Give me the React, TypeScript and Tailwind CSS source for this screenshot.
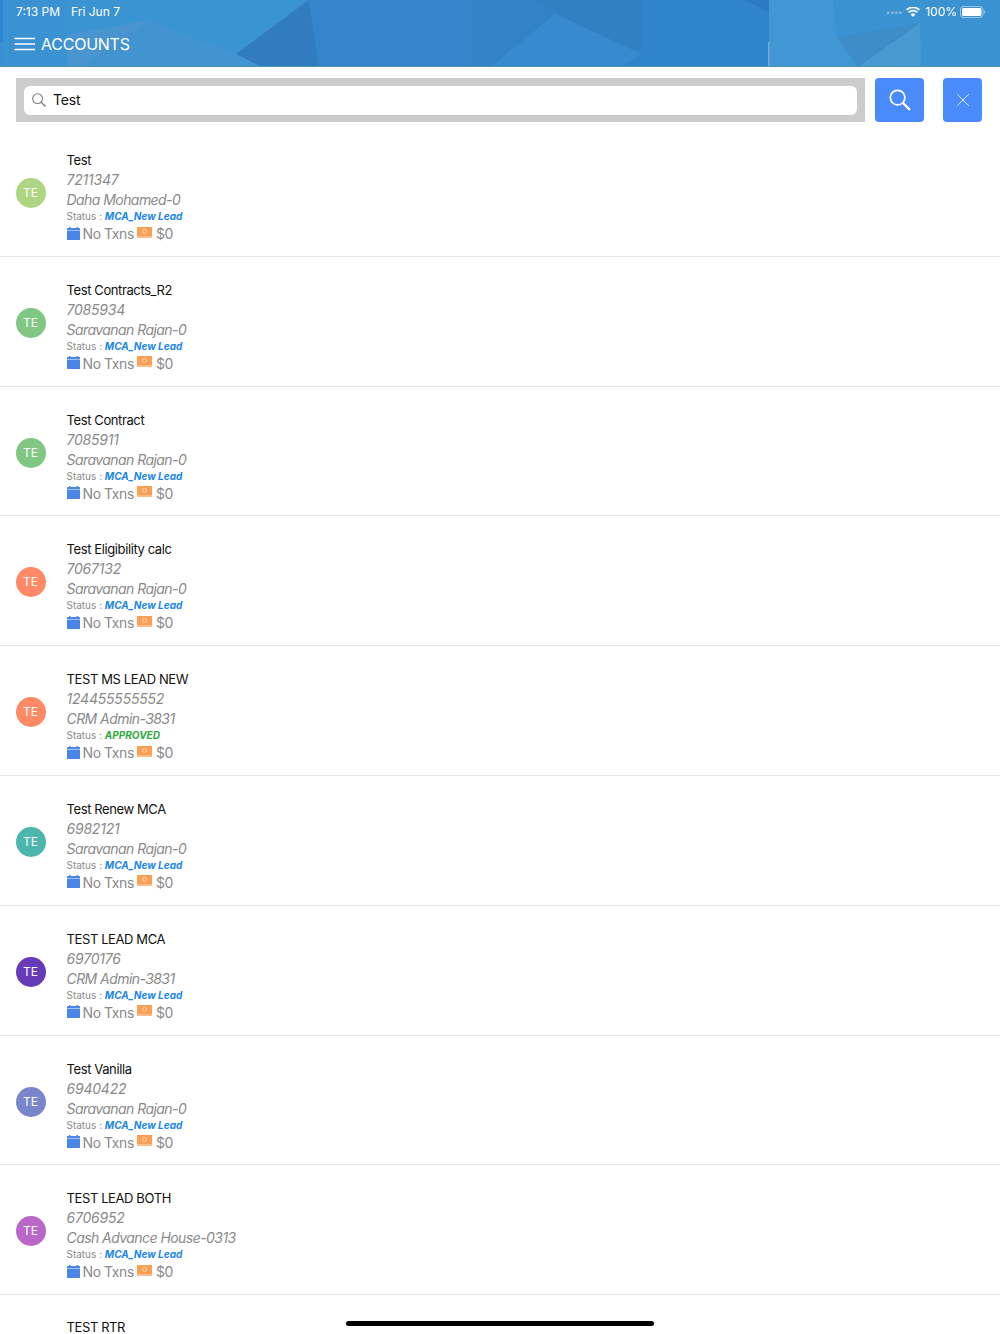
import { X } from 'lucide-react';

type Account = {
  name: string;
  id: string;
  owner: string;
  status: string;
  color: string;
};

const accounts: Account[] = [
  { name: 'Test', id: '7211347', owner: 'Daha Mohamed-0', status: 'MCA_New Lead', color: 'bg-[#aed581]' },
  { name: 'Test Contracts_R2', id: '7085934', owner: 'Saravanan Rajan-0', status: 'MCA_New Lead', color: 'bg-[#81c784]' },
  { name: 'Test Contract', id: '7085911', owner: 'Saravanan Rajan-0', status: 'MCA_New Lead', color: 'bg-[#81c784]' },
  { name: 'Test Eligibility calc', id: '7067132', owner: 'Saravanan Rajan-0', status: 'MCA_New Lead', color: 'bg-[#ff8a65]' },
  { name: 'TEST MS LEAD NEW', id: '124455555552', owner: 'CRM Admin-3831', status: 'APPROVED', color: 'bg-[#ff8a65]' },
  { name: 'Test Renew MCA', id: '6982121', owner: 'Saravanan Rajan-0', status: 'MCA_New Lead', color: 'bg-[#4db6ac]' },
  { name: 'TEST LEAD MCA', id: '6970176', owner: 'CRM Admin-3831', status: 'MCA_New Lead', color: 'bg-[#673ab7]' },
  { name: 'Test Vanilla', id: '6940422', owner: 'Saravanan Rajan-0', status: 'MCA_New Lead', color: 'bg-[#7986cb]' },
  { name: 'TEST LEAD BOTH', id: '6706952', owner: 'Cash Advance House-0313', status: 'MCA_New Lead', color: 'bg-[#ba68c8]' },
];

function HeaderArt() {
  return (
    <svg className="absolute inset-0" width="1000" height="67" viewBox="0 0 1000 67">
      <rect width="1000" height="67" fill="#3a8fd0" />
      <rect y="0" width="3" height="42" fill="#2f86d0" />
      <polygon points="3,0 306,0 236,54 205,67 3,67" fill="#3b92d2" />
      <polygon points="67,0 306,0 236,54 150,20 67,40" fill="#3a94d2" />
      <polygon points="150,20 236,54 262,67 83,67" fill="#4194d0" />
      <polygon points="67,35 150,20 83,67 67,67" fill="#4a95cf" />
      <polygon points="309,0 319,67 262,67 236,54" fill="#317bbf" />
      <polygon points="309,0 472,0 472,67 319,67" fill="#3485c9" />
      <polygon points="472,0 530,0 555,14 491,67 472,67" fill="#3283c6" />
      <polygon points="530,0 769,0 769,67 622,67 641,54 555,14" fill="#3180c2" />
      <polygon points="641,0 769,0 769,67 622,67 641,54" fill="#3084cc" />
      <polygon points="745,0 769,0 769,12" fill="#2c7ac6" />
      <polygon points="555,14 641,54 622,67 491,67" fill="#388acf" />
      <polygon points="769,0 833,0 837,37 858,67 769,67" fill="#4296d4" />
      <rect x="768" y="42" width="1.5" height="25" fill="#6aaede" />
      <polygon points="833,0 1000,0 1000,67 921,67 920,23 837,37" fill="#3a92d0" />
      <polygon points="837,37 920,23 858,67" fill="#3e8cc8" />
      <polygon points="858,67 920,23 921,67" fill="#4a9ad2" />
      <rect y="66" width="1000" height="1" fill="#4e90c0" />
    </svg>
  );
}

function MenuIcon() {
  return (
    <svg width="22" height="14" viewBox="0 0 22 14" fill="none" stroke="#ffffff" strokeWidth="1.4">
      <path d="M0.5 1.5h20.5M0.5 7h20.5M0.5 12.5h20.5" />
    </svg>
  );
}

function WifiIcon() {
  return (
    <svg width="14" height="10" viewBox="0 0 14 10" fill="none">
      <path d="M7 10L4.6 7.5a3.4 3.4 0 0 1 4.8 0z" fill="#ffffff" />
      <path d="M2.7 5.3a6.1 6.1 0 0 1 8.6 0" stroke="#ffffff" strokeWidth="1.7" />
      <path d="M0.6 3a9 9 0 0 1 12.8 0" stroke="#ffffff" strokeWidth="1.7" />
    </svg>
  );
}

function BatteryIcon() {
  return (
    <svg width="26" height="12" viewBox="0 0 26 12" fill="none">
      <rect x="0.5" y="0.5" width="22.5" height="11" rx="3" stroke="#ffffff" strokeOpacity="0.5" />
      <rect x="2" y="2" width="19.5" height="8" rx="1.6" fill="#ffffff" />
      <path d="M24.2 4.2c0.8 0.3 1.2 0.9 1.2 1.8s-0.4 1.5-1.2 1.8z" fill="#ffffff" fillOpacity="0.5" />
    </svg>
  );
}

function SmallSearchIcon() {
  return (
    <svg width="14" height="14" viewBox="0 0 14 14" fill="none" stroke="#7c7c7c" strokeWidth="1.1">
      <circle cx="5.6" cy="5.6" r="4.9" />
      <path d="M9.2 9.2l4.3 4.3" strokeWidth="1.4" />
    </svg>
  );
}

function BigSearchIcon() {
  return (
    <svg width="22" height="22" viewBox="0 0 22 22" fill="none" stroke="#ffffff" strokeWidth="1.7">
      <circle cx="8.6" cy="8.6" r="7.3" />
      <path d="M13.9 13.9l7 7" strokeWidth="2.2" />
    </svg>
  );
}

function CalendarIcon() {
  return (
    <svg width="13" height="13" viewBox="0 0 13 13">
      <rect x="0" y="1" width="13" height="12" rx="0.5" fill="#4a86e8" />
      <rect x="2" y="0" width="1.5" height="2" fill="#4a86e8" />
      <rect x="9.5" y="0" width="1.5" height="2" fill="#4a86e8" />
      <rect x="0" y="3" width="13" height="0.7" fill="#ffffff" fillOpacity="0.7" />
    </svg>
  );
}

function MoneyIcon() {
  return (
    <svg width="15" height="11" viewBox="0 0 15 11">
      <rect x="0" y="0" width="15" height="9" fill="#fb9f55" />
      <rect x="0" y="9" width="15" height="2" fill="#fcbd88" />
      <circle cx="7.5" cy="4.4" r="2" fill="none" stroke="#ffd9ba" strokeWidth="1" />
    </svg>
  );
}

function AccountRow({ account }: { account: Account }) {
  const approved = account.status === 'APPROVED';
  return (
    <div className="flex h-[129.8px] items-start border-b border-[#e2e2e2] pl-[15.5px]">
      <div className={`mt-[51px] flex h-[30px] w-[30px] shrink-0 items-center justify-center rounded-full text-xs text-white ${account.color}`}>
        TE
      </div>
      <div className="ml-[21px] flex flex-col pt-[23px]">
        <div className="text-[13px] leading-5 tracking-[-0.03em] text-[#111]">{account.name}</div>
        <div className="text-sm leading-5 tracking-[-0.015em] text-[#8a8a8a] italic">{account.id}</div>
        <div className="text-sm leading-5 tracking-[-0.04em] text-[#8a8a8a] italic">{account.owner}</div>
        <div className="mb-px text-[10px] leading-[13px] text-[#8a8a8a]">
          Status :{' '}
          <span className={`font-bold italic ${approved ? 'text-[#2eaa3c]' : 'text-[#1a86e8]'}`}>
            {account.status}
          </span>
        </div>
        <div className="flex h-5 items-center text-sm tracking-[-0.03em] text-[#8a8a8a]">
          <span className="-mt-[2px]"><CalendarIcon /></span>
          <span className="ml-[3px]">No Txns</span>
          <span className="mr-1 ml-[3px] -mt-1"><MoneyIcon /></span>
          <span>$0</span>
        </div>
      </div>
    </div>
  );
}

export default function App() {
  return (
    <div className="relative h-[1334px] w-[1000px] overflow-hidden bg-white font-['Inter','Noto_Sans',sans-serif]">
      <header className="relative h-[67px] text-white">
        <HeaderArt />
        <div className="relative flex h-6 items-center justify-between pr-[14px] pl-4 text-xs">
          <div className="flex gap-[11px]">
            <span>7:13 PM</span>
            <span>Fri Jun 7</span>
          </div>
          <div className="flex items-center">
            <span className="mr-[4px] text-[8px] leading-none tracking-tighter text-white/40">••••</span>
            <WifiIcon />
            <span className="mr-[3px] ml-[5px]">100%</span>
            <BatteryIcon />
          </div>
        </div>
        <div className="relative flex h-10 items-center pl-[14px]">
          <MenuIcon />
          <span className="ml-[5px] text-base tracking-[-0.015em]">ACCOUNTS</span>
        </div>
      </header>

      <div className="flex h-[60px] items-start pt-[11px] pl-4">
        <div className="flex h-11 w-[849px] items-center bg-[#cccccc] px-2">
          <div className="flex h-[29px] w-full items-center rounded-md bg-white pl-2">
            <SmallSearchIcon />
            <span className="ml-[7px] text-sm tracking-[-0.01em] text-[#111]">Test</span>
          </div>
        </div>
        <button className="ml-[10px] flex h-11 w-[49px] items-center justify-center rounded bg-[#4a8bfc] text-white">
          <BigSearchIcon />
        </button>
        <button className="ml-[19px] flex h-11 w-[39px] items-center justify-center rounded bg-[#4a8bfc] text-white">
          <X className="h-[22px] w-[22px]" strokeWidth={0.9} />
        </button>
      </div>

      {accounts.map((account) => (
        <AccountRow key={account.id} account={account} />
      ))}

      <div className="pt-[25.5px] pl-[66.5px] text-[13px] leading-[12px] tracking-[-0.03em] text-[#111]">TEST RTR</div>

      <div className="absolute top-[1321px] left-[346px] h-[5px] w-[308px] rounded-full bg-black" />
    </div>
  );
}
